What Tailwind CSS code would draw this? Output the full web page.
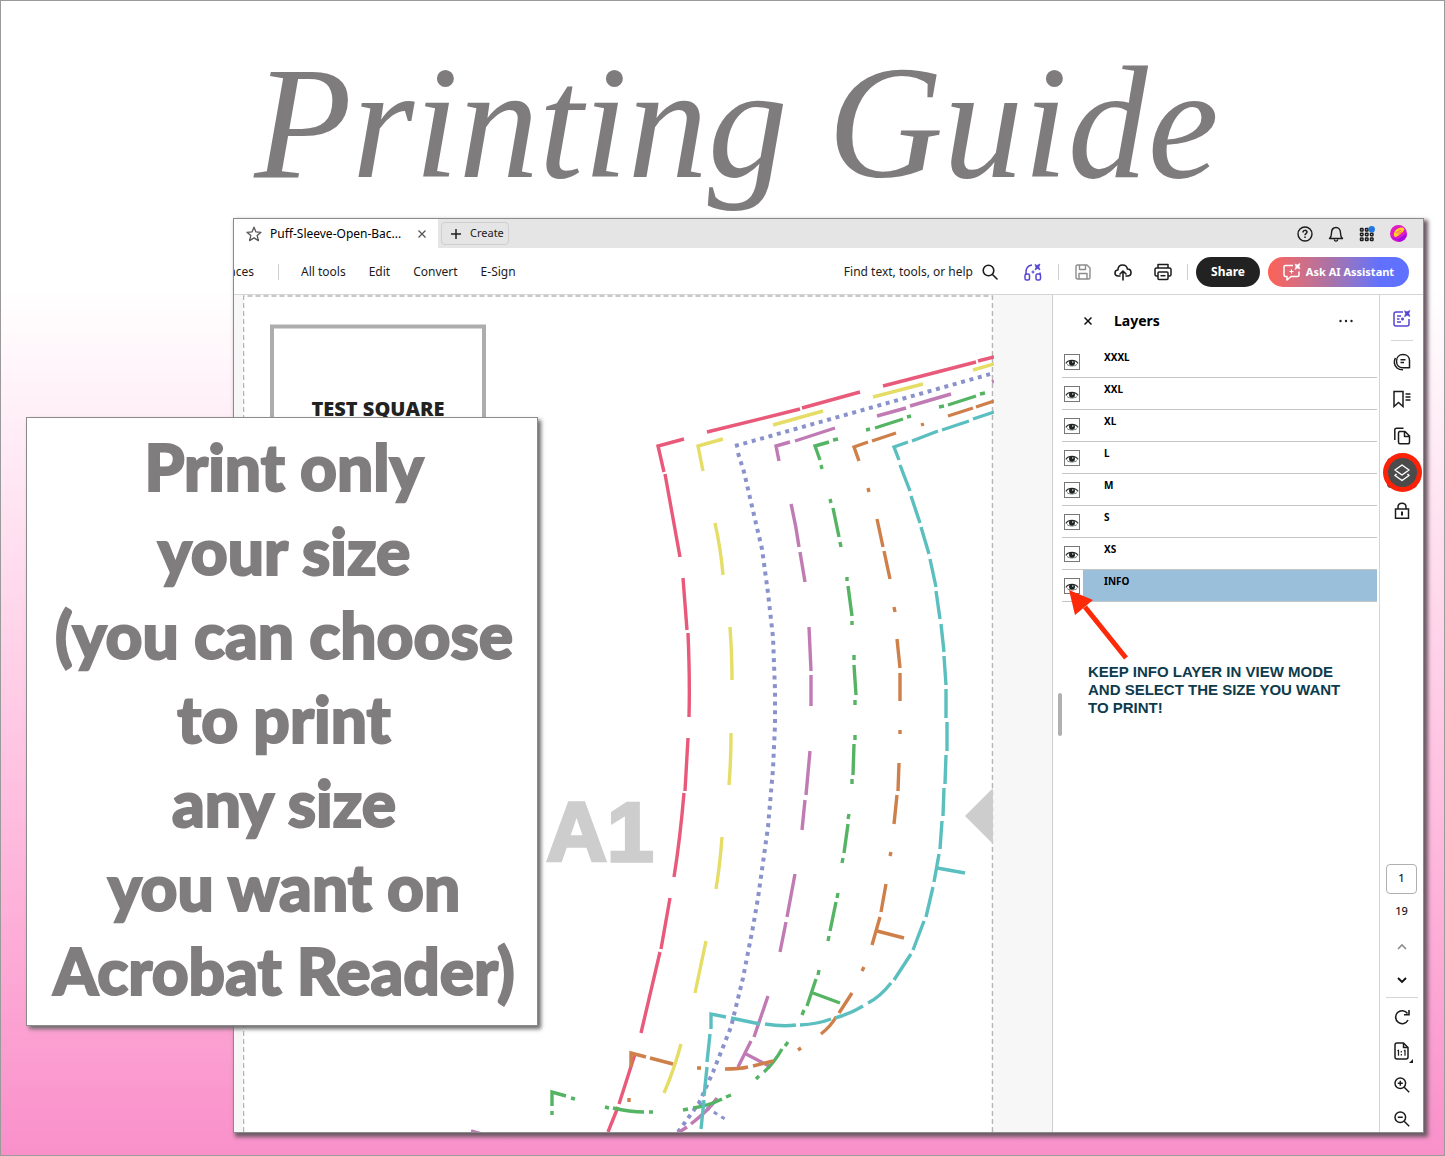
<!DOCTYPE html>
<html lang="en">
<head>
    <meta charset="UTF-8">
    <meta name="viewport" content="width=device-width, initial-scale=1.0">
    <title>Printing Guide</title>
    <script src="https://cdn.jsdelivr.net/npm/@tailwindcss/browser@4"></script>
</head>
<body class="font-['Noto_Sans',sans-serif] text-[#1c1c1c]">

<div class="relative flex min-h-screen flex-col border border-[#9a9a9a] bg-linear-to-b from-white from-25% to-[#f990ca]">

    <header class="relative z-10 h-[217px] text-center pl-7 pointer-events-none">
        <h1 class="pt-[40px] font-['Liberation_Serif',serif] text-[160px] leading-[164px] italic whitespace-nowrap text-[#7f7c7d]">Printing Guide</h1>
    </header>

    <!-- Acrobat window -->
    <main class="ml-[232px] mr-5 mb-[22px] flex flex-1 flex-col overflow-hidden border border-[#8b8b8b] bg-white shadow-[3px_3px_4px_1px_#6b5a64]">

        <!-- tabs -->
        <div class="flex h-[29px] shrink-0 items-center bg-[#e5e5e5]">
            <div class="flex h-full w-[204px] items-center bg-white pl-3">
                <svg class="size-4" viewBox="0 0 16 16" fill="none" stroke="#555" stroke-width="1.3" stroke-linejoin="round"><path d="M8 1.2l2 4.7 5 .4-3.8 3.3 1.2 5L8 11.9l-4.4 2.7 1.2-5L1 6.3l5-.4z"/></svg>
                <span class="ml-2 text-[12px] whitespace-nowrap text-black">Puff-Sleeve-Open-Bac...</span>
                <button class="ml-auto mr-3" aria-label="Close tab"><svg class="size-2" viewBox="0 0 8 8" stroke="#555" stroke-width="1.3"><path d="M.5.5l7 7M7.5.5l-7 7"/></svg></button>
            </div>
            <button class="ml-[3px] flex h-[23px] w-[68px] items-center rounded border border-[#cfcfcf] pl-2 text-[11px]">
                <svg class="mr-2 size-3" viewBox="0 0 12 12" stroke="#222" stroke-width="1.5"><path d="M6 1v10M1 6h10"/></svg>Create
            </button>
            <div class="ml-auto flex items-center gap-[15px] pr-4">
                <button aria-label="Help"><svg class="size-4" viewBox="0 0 16 16" fill="none" stroke="#1c1c1c" stroke-width="1.4"><circle cx="8" cy="8" r="7"/><path d="M6 6.4c0-2.7 4-2.6 4-.3C10 7.600 8 7.600 8 9.200M8 10.600v1.400" stroke-width="1.500"/></svg></button>
                <button aria-label="Notifications"><svg class="size-4" viewBox="0 0 16 16" fill="none" stroke="#1c1c1c" stroke-width="1.4" stroke-linejoin="round"><path d="M1.500 12.500c1.800-1.500 2-3 2-5.500C3.500 3.500 5.500 1.500 8 1.500s4.500 2 4.500 5.500c0 2.500.2 4 2 5.500zM6.300 13.500c.3 2.200 3.100 2.200 3.400 0"/></svg></button>
                <button aria-label="Apps"><svg class="size-4" viewBox="0 0 16 16" fill="none" stroke="#1c1c1c" stroke-width="1.500"><rect x="1.500" y="2.500" width="2.500" height="2.500" rx=".6"/><rect x="6.500" y="2.500" width="2.500" height="2.500" rx=".6"/><rect x="1.500" y="7.200" width="2.500" height="2.500" rx=".6"/><rect x="6.500" y="7.200" width="2.500" height="2.500" rx=".6"/><rect x="11.500" y="7.200" width="2.500" height="2.500" rx=".6"/><rect x="1.500" y="12" width="2.500" height="2.500" rx=".6"/><rect x="6.500" y="12" width="2.500" height="2.500" rx=".6"/><rect x="11.500" y="12" width="2.500" height="2.500" rx=".6"/><circle cx="12.700" cy="3.200" r="3.200" fill="#1f78e0" stroke="none"/></svg></button>
                <button aria-label="Account"><svg class="size-[17px]" viewBox="0 0 17 17"><defs><clipPath id="av"><circle cx="8.500" cy="8.500" r="8.500"/></clipPath></defs><g clip-path="url(#av)"><path d="M0 0h17v17H0z" fill="#e01bc4"/><path d="M0 12L10 17h7V8L8 14z" fill="#a80be6"/><path d="M4 11C3 6 8 2 12 2.500s2 4-1 6-5 5-7 2.500z" fill="#ffd21f"/><path d="M6 8l5-3M8 9l4-2" stroke="#ff7b5c" stroke-width="1.200"/></g></svg></button>
            </div>
        </div>

        <!-- toolbar -->
        <div class="flex h-[47px] shrink-0 items-center border-b border-[#d5d5d5] pt-[2px] text-[12px] whitespace-nowrap">
            <div class="flex w-5 justify-end overflow-hidden"><span>aces</span></div>
            <div class="ml-6 h-4 w-px bg-[#cfcfcf]"></div>
            <nav class="ml-[22px] flex gap-[23px]">
                <a href="#">All tools</a>
                <a href="#">Edit</a>
                <a href="#">Convert</a>
                <a href="#">E-Sign</a>
            </nav>
            <div class="ml-auto flex items-center pr-[14px]">
                <button class="flex items-center gap-[9px]">Find text, tools, or help
                    <svg class="size-4" viewBox="0 0 16 16" fill="none" stroke="#1c1c1c" stroke-width="1.600" stroke-linecap="round"><circle cx="6.500" cy="6.500" r="5.300"/><path d="M10.500 10.500l4.500 4.500"/></svg>
                </button>
                <button class="ml-[26px]" aria-label="Listen"><svg class="size-[18px]" viewBox="0 0 18 18" fill="none" stroke="#5546d3" stroke-width="1.500"><path d="M2 12V9c0-4 2.500-6.500 6-7M16 12V9.500"/><rect x="1" y="11" width="4.500" height="6" rx="1.500"/><rect x="12" y="11" width="4.500" height="6" rx="1.500"/><path d="M11 1.500l2 1 3-1.500-1.200 3L16 7l-2.500-1.500L11 7l1-2.700z" fill="#5546d3" stroke-width=".8"/><path d="M9 7.500v3M7.500 9h3" stroke-width="1.200"/></svg></button>
                <div class="ml-4 h-4 w-px bg-[#cfcfcf]"></div>
                <button class="ml-4" aria-label="Save"><svg class="size-4" viewBox="0 0 16 16" fill="none" stroke="#8c8c8c" stroke-width="1.400" stroke-linejoin="round"><path d="M1 2.500C1 1.500 1.500 1 2.500 1H12l3 3v9.500c0 1-.5 1.500-1.500 1.500h-11C1.500 15 1 14.500 1 13.500zM4.500 1v4.500h6V1M4 15V9.500h8V15"/></svg></button>
                <button class="ml-[23px]" aria-label="Upload"><svg class="size-[18px]" viewBox="0 0 18 18" fill="none" stroke="#1c1c1c" stroke-width="1.600" stroke-linecap="round" stroke-linejoin="round"><path d="M6 13H4.200C2.400 13 1 11.700 1 10s1.300-3 2.900-3C4 4 6 2 8.700 2c2.600 0 4.300 1.600 4.700 4 2.200 0 3.600 1.500 3.600 3.500S15.600 13 13.600 13H12M9 17V8.500M6 11l3-3 3 3"/></svg></button>
                <button class="ml-[22px]" aria-label="Print"><svg class="size-[18px]" viewBox="0 0 18 18" fill="none" stroke="#1c1c1c" stroke-width="1.500" stroke-linejoin="round"><path d="M4 5V1.500h10V5M4 13H2.500C1.500 13 1 12.500 1 11.500v-5C1 5.500 1.500 5 2.500 5h13c1 0 1.500.5 1.500 1.500v5c0 1-.5 1.500-1.500 1.500H14"/><rect x="4" y="9" width="10" height="7.500" rx="1"/><path d="M6.500 12.700h5"/></svg></button>
                <div class="ml-[15px] h-4 w-px bg-[#cfcfcf]"></div>
                <button class="ml-2 h-[30px] w-16 rounded-full bg-[#222] font-bold text-white">Share</button>
                <button class="ml-2 flex h-[30px] w-[141px] items-center justify-center gap-[5px] rounded-full bg-linear-to-r from-[#ff6052] via-[#a872a8] via-45% to-[#6070ff] to-80% text-[11px] font-bold text-white">
                    <svg class="size-[18px]" viewBox="0 0 18 18" fill="none" stroke="#fff" stroke-width="1.500" stroke-linejoin="round"><path d="M10 2.500H2.500C1.500 2.500 1 3 1 4v8c0 1 .5 1.500 1.500 1.500H4V17l4-3.500h6.500c1 0 1.500-.5 1.500-1.500V8.500"/><path d="M12 1l2 1 3-1.500L16 3.500 17 6l-2.500-1L12 6.500 13 3.700z" fill="#fff" stroke-width=".6"/><path d="M8.500 6.500v4M6.500 8.500h4" stroke-width="1.200"/></svg>Ask AI Assistant
                </button>
            </div>
        </div>

        <div class="flex min-h-0 flex-1">
            <!-- document -->
            <section class="min-w-0 flex-1 bg-[#f7f7f7] pl-[9px] pr-[58px]">
                <svg class="block h-[837px] w-full bg-white" viewBox="243 295 751 837" preserveAspectRatio="xMinYMin slice" fill="none" stroke-width="3.4">
                    <path d="M243.500 1132V296h749V1132" stroke="#b5b5b5" stroke-width="1.500" stroke-dasharray="5 3"/>
                    <path d="M272 440V326.500h212V440" stroke="#adadad" stroke-width="4"/>
                    <text x="378" y="416" text-anchor="middle" class="fill-[#222] font-['Open_Sans',sans-serif] text-[20px] font-extrabold">TEST SQUARE</text>
                    <text x="600" y="861" text-anchor="middle" stroke="#cdcdcd" class="fill-[#cdcdcd] font-['Liberation_Sans',sans-serif] text-[84px] font-bold">A1</text>
                    <path d="M993 788L965 816L993 844z" fill="#cdcdcd"/>
                    <!-- XXXL -->
                    <path stroke="#e8597a" d="M684 439L658 446L664 472M707 432L800 409M802 408L860 392M883 386L976 362M978 361L994 357M665 474L680 557M683 578L687 630M688 633Q690 680 689 717M688 738L685 791M684 793Q680 840 674 877M670 898L661 949M660 952L641 1033M635 1054L619 1104M618 1107L608 1132"/>
                    <!-- XXL -->
                    <path stroke="#e5dd66" d="M723 439L698 446L703 471M773 425L823 411M873 397L923 384M973 370L994 364M715 523Q721 550 723 575M730 627Q732 655 732 680M731 733Q731 760 729 785M722 837Q720 865 716 889M706 941L695 993M681 1044Q674 1070 664 1093"/>
                    <!-- XL -->
                    <g stroke="#8a92cc" stroke-width="4" stroke-dasharray="4 4.700">
                        <path d="M735 446L994 373"/>
                        <path d="M738 453L744 472L754 515L762 549L768 593L773 637L775 690L775 725L773 769L768 827L758 898L753 927L743 978L731 1027L713 1072L699 1103L678 1132"/>
                        <path d="M699 1103L725 1119" stroke-width="3"/>
                    </g>
                    <!-- L -->
                    <path stroke="#c17bb4" d="M790 442L776 446L779 461M795 441L835 428M877 416L906 408M910 406L951 394M992 382L994 381M791 504Q796 525 799 547M800 552L805 582M809 627L811 671M811 675V706M810 751L806 795M805 800L802 830M795 874L787 917M786 922L780 952M768 996L754 1037M751 1041L738 1067M746 1054L771 1067M717 1098Q710 1109 691 1124M687 1127L678 1133M471 1131L482 1134"/>
                    <!-- M -->
                    <path stroke="#55b463" d="M829 442L815 446L820 460M833 440L838 439M821 465L822 469M866 430L870 429M875 428L903 419M907 417L911 416M939 407L944 406M948 405L976 396M980 394L985 393M830 499L831 503M833 508L839 537M840 542L841 547M847 577V581M848 586L852 616M852 621V625M854 655V660M854 665L856 695M855 700V705M855 735V740M854 744L853 775M852 779V784M849 814L848 819M848 824L844 853M843 858L842 863M838 893L837 898M836 902L830 931M829 936L828 941M819 970L818 975M816 979L807 1006M804 1010L802 1015M813 993L840 1003M788 1042L785 1046M782 1049Q774 1063 764 1072M759 1076L756 1079M731 1095L726 1097M722 1099Q708 1106 693 1108M688 1109L683 1110M653 1112H649M644 1112Q630 1112 613 1108M609 1108L605 1107M566 1096L552 1092V1106M552 1111V1115M571 1098L575 1099"/>
                    <!-- S -->
                    <path stroke="#cf804a" d="M868 442L854 447L859 461M872 441L896 433M921 425L924 424M948 416L973 408M976 407L994 401M868 488L869 492M877 519L883 547M884 551L890 579M894 607L895 612M897 639L900 668M900 673V701M900 730V734M899 763L898 791M897 795L894 824M891 852L890 856M886 884L881 912M880 917L872 945M877 931L904 938M864 967L862 971M852 993L839 1013M836 1017Q831 1026 821 1034M801 1048L798 1050M773 1061L753 1066M748 1067Q740 1069 725 1069M701 1068H697M673 1064L650 1058M646 1057L631 1053V1067M629 1098V1102"/>
                    <!-- XS -->
                    <path stroke="#5bbfc0" d="M908 442L894 447L899 460M912 441L938 431M942 430L969 421M973 419L994 412M900 465L910 491M911 496L920 523M921 527L929 554M930 559L936 587M936 591L940 619M941 624L944 652M944 656L946 685M946 689V718M947 722V751M946 755L945 784M944 788L943 816M942 821L940 849M939 854L934 882M933 887L926 917M924 921L913 950M911 954L894 980M891 983Q880 997 868 1003M863 1006Q850 1014 835 1018M831 1019Q818 1024 800 1025M796 1025Q783 1027 765 1024M760 1024L731 1018M726 1017L711 1014V1029M710 1034L707 1062M707 1067L704 1096M704 1100L701 1129M937 868L965 873"/>
                </svg>
            </section>

            <!-- layers panel -->
            <section class="relative w-[327px] shrink-0 border-l border-[#cfcfcf] pl-[9px] pr-[2px]">
                <div class="absolute left-[5px] top-[398px] h-[43px] w-1 rounded bg-[#b0b0b0]"></div>
                <div class="flex h-[51px] items-center pl-[22px] pr-6">
                    <button aria-label="Close panel"><svg class="size-2" viewBox="0 0 8 8" stroke="#111" stroke-width="1.500"><path d="M.5.5l7 7M7.500.5l-7 7"/></svg></button>
                    <h2 class="ml-[22px] text-[14px] font-bold text-black">Layers</h2>
                    <button class="ml-auto" aria-label="More"><svg class="h-1 w-[14px]" viewBox="0 0 14 4" fill="#222"><circle cx="1.500" cy="2" r="1.200"/><circle cx="7" cy="2" r="1.200"/><circle cx="12.500" cy="2" r="1.200"/></svg></button>
                </div>
                <ul id="layers" class="text-[10px] font-bold text-black"></ul>
                <svg class="absolute left-[14px] top-[294px] h-[72px] w-[64px]" viewBox="0 0 64 72"><path d="M18 18L59 69" stroke="#fc2a08" stroke-width="5"/><path d="M2 1L26 11 8 26z" fill="#fc2a08"/></svg>
                <p class="mt-[61px] ml-[26px] font-['Liberation_Sans',sans-serif] text-[15px] leading-[18px] font-bold whitespace-nowrap text-[#0d3b4c]">KEEP INFO LAYER IN VIEW MODE<br>AND SELECT THE SIZE YOU WANT<br>TO PRINT!</p>
            </section>

            <!-- right rail -->
            <aside class="flex w-11 shrink-0 flex-col items-center justify-between border-l border-[#d5d5d5] text-[11px] font-medium">
                <div class="flex flex-col items-center pt-[11px]">
                    <button class="flex h-[26px] items-center" aria-label="AI Assistant"><svg class="size-[18px]" viewBox="0 0 18 18" fill="none" stroke="#5546d3" stroke-width="1.500"><path d="M10 2H3C1.700 2 1 2.700 1 4v10c0 1.300.7 2 2 2h11c1.300 0 2-.7 2-2V9"/><path d="M4 6h4M4 9h2.500M4 12h4M9.500 7.500v3M8 9h3"/><path d="M11.500.8l2.300 1 3.200-1.300-1.200 3L17 6.500l-2.800-1.200-2.700 1.500 1-3z" fill="#5546d3" stroke-width=".6"/></svg></button>
                    <div class="mt-2 mb-[2px] h-px w-[22px] bg-[#d5d5d5]"></div>
                    <button class="flex h-[37px] items-center" aria-label="Comments"><svg class="size-[18px]" viewBox="0 0 18 18" fill="none" stroke="#1c1c1c" stroke-width="1.500" stroke-linejoin="round"><path d="M10 1.500c4 0 6.500 2.700 6.500 6v7.200H10c-4 0-6.500-2.700-6.500-6.500S6 1.500 10 1.500z"/><path d="M2.500 5C.5 8 1 12.500 4 15c1.500 1.300 3.500 1.800 6 1.800M7.500 6.700h5M7.500 9.500h3.500"/></svg></button>
                    <button class="flex h-[37px] items-center" aria-label="Bookmarks"><svg class="size-[18px]" viewBox="0 0 18 18" fill="none" stroke="#1c1c1c" stroke-width="1.500"><path d="M1 1.500h9v15L5.500 12.500 1 16.500zM12.500 4h5M12.500 7h5M12.500 10h5"/></svg></button>
                    <button class="flex h-[37px] items-center" aria-label="Pages"><svg class="size-[18px]" viewBox="0 0 18 18" fill="none" stroke="#1c1c1c" stroke-width="1.500" stroke-linejoin="round"><path d="M6 4.500h6l4.500 4.500v6c0 1.200-.5 1.800-1.800 1.800H7c-1 0-1.500-.6-1.500-1.800V6c0-1 .5-1.500 1.500-1.500M11.500 4.500V9.500h5M1.800 13V3c0-1.200.5-1.700 1.700-1.700h7"/></svg></button>
                    <div class="relative flex h-[38px] items-center">
                        <button class="flex size-[30px] items-center justify-center rounded bg-[#4b4b4b]" aria-label="Layers"><svg class="size-5" viewBox="0 0 20 20" fill="none" stroke="#fff" stroke-width="1.500" stroke-linejoin="round"><path d="M10 2l7 5-7 5-7-5zM4.500 11L3 12.500l7 5 7-5-1.500-1.500"/></svg></button>
                        <div class="absolute -left-1 -top-[1px] size-[39px] rounded-full border-[5px] border-[#fc2207]"></div>
                    </div>
                    <button class="flex h-[37px] items-center" aria-label="Protect"><svg class="size-[18px]" viewBox="0 0 18 18" fill="none" stroke="#1c1c1c" stroke-width="1.500"><path d="M2.500 7h13v9.300h-13zM5 7V5c0-5 8-5 8 0v2"/><path d="M9 9.500v4" stroke-width="2"/></svg></button>
                </div>
                <div class="flex flex-col items-center pb-px">
                    <input class="h-[30px] w-[31px] rounded border border-[#b0b0b0] pb-1 text-center" value="1" aria-label="Page">
                    <span class="mt-[5px] h-6 leading-6">19</span>
                    <button class="mt-3 flex h-6 items-center" aria-label="Previous page"><svg class="size-[10px]" viewBox="0 0 10 10" fill="none" stroke="#8c8c8c" stroke-width="1.600"><path d="M1 7l4-4 4 4"/></svg></button>
                    <button class="mt-[9px] flex h-6 items-center" aria-label="Next page"><svg class="size-[10px]" viewBox="0 0 10 10" fill="none" stroke="#111" stroke-width="1.900"><path d="M1 3l4 4 4-4"/></svg></button>
                    <div class="mt-[5px] mb-[7px] h-px w-8 bg-[#d5d5d5]"></div>
                    <div class="flex flex-col items-center gap-[10px]">
                        <button class="flex h-6 items-center" aria-label="Rotate"><svg class="size-4" viewBox="0 0 16 16" fill="none" stroke="#1c1c1c" stroke-width="1.600"><path d="M13.500 4.500A6.500 6.500 0 1 0 14 11M15 1v4.800h-5"/></svg></button>
                        <button class="relative flex h-6 items-center" aria-label="Actual size"><svg class="h-[18px] w-[15px]" viewBox="0 0 15 18" fill="none" stroke="#1c1c1c" stroke-width="1.500" stroke-linejoin="round"><path d="M1 3c0-1.300.5-2 2-2h6.500L14 5.500V15c0 1.300-.5 2-2 2H3c-1.500 0-2-.7-2-2zM9.500 1v4.500H14"/><path d="M3.500 9l1-.8v5.500M10 9l1-.8v5.500M7.300 9v1.400M7.300 12v1.400" stroke-width="1.200"/></svg><svg class="absolute -right-1 bottom-0 size-1" viewBox="0 0 4 4"><path d="M4 0v4H0z" fill="#1c1c1c"/></svg></button>
                        <button class="flex h-6 items-center" aria-label="Zoom in"><svg class="size-4" viewBox="0 0 16 16" fill="none" stroke="#1c1c1c" stroke-width="1.500"><circle cx="6.300" cy="6.300" r="5.300"/><path d="M10.200 10.200l5 5M6.300 3.800v5M3.800 6.300h5"/></svg></button>
                        <button class="flex h-6 items-center" aria-label="Zoom out"><svg class="size-4" viewBox="0 0 16 16" fill="none" stroke="#1c1c1c" stroke-width="1.500"><circle cx="6.300" cy="6.300" r="5.300"/><path d="M10.200 10.200l5 5M3.800 6.300h5"/></svg></button>
                    </div>
                </div>
            </aside>
        </div>
    </main>

    <!-- note over the window -->
    <div class="absolute left-[25px] top-[416px] z-20 h-[609px] w-[512px] border border-[#8b8b8b] bg-white pt-[7px] pl-1 text-center shadow-[3px_3px_4px_0px_#6b6b6b]">
        <p class="font-['Lato',sans-serif] text-[64px] leading-[84px] font-black whitespace-nowrap text-[#807d7e] [-webkit-text-stroke:2px_#807d7e]">Print only<br>your size<br>(you can choose<br>to print<br>any size<br>you want on<br>Acrobat Reader)</p>
    </div>
</div>

<script>
    const layers = ['XXXL', 'XXL', 'XL', 'L', 'M', 'S', 'XS', 'INFO'];
    const list = document.getElementById('layers');

    layers.forEach(name => {
        const selected = name === 'INFO';
        const li = document.createElement('li');
        li.className = 'flex h-8 border-b border-[#c4c4c4]';
        li.innerHTML = `
            <button class="mt-2 ml-[2px] mr-[3px] size-4 shrink-0 border border-[#777] bg-white" aria-label="Toggle ${name}">
                <svg class="size-[14px]" viewBox="0 0 14 14"><path d="M1 8.500C2.500 4.500 11 4 13 8.500" fill="none" stroke="#333" stroke-width="1.300"/><path d="M2 9.500c2 2 8 2 10 0" fill="none" stroke="#777" stroke-width="1"/><ellipse cx="7" cy="7.800" rx="3" ry="2.900" fill="#1c2420"/><circle cx="7.800" cy="7" r=".7" fill="#fff"/></svg>
            </button>
            <span class="flex-1 pl-[21px] pt-1 leading-[14px] ${selected ? 'bg-[#9abfda]' : ''}">${name}</span>
        `;
        list.appendChild(li);
    });
</script>

</body>
</html>
